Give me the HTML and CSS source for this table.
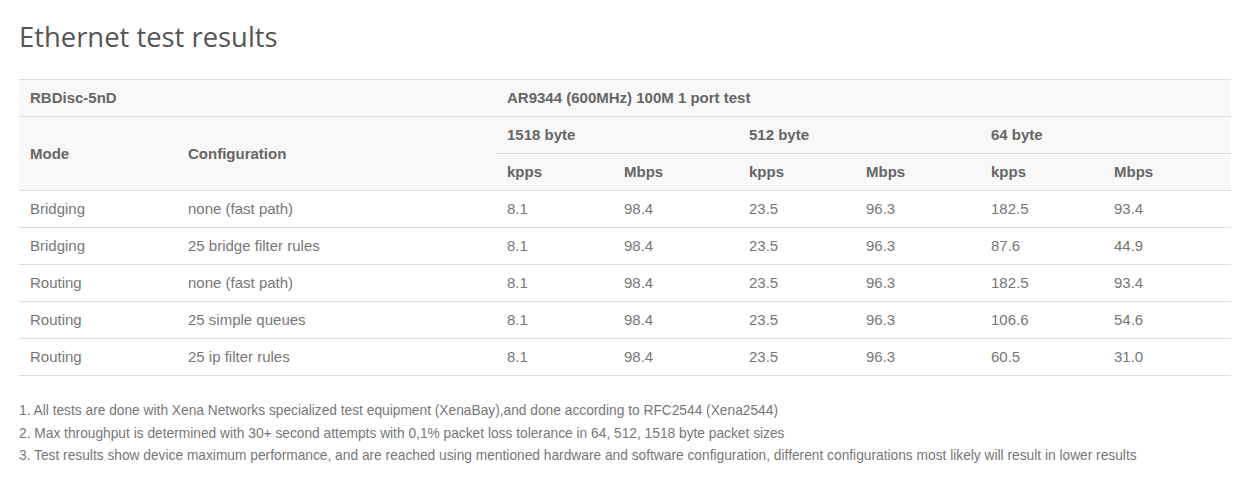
FILE: index.html
```html
<!DOCTYPE html>
<html lang="en">
<head>
<meta charset="utf-8">
<title>Ethernet test results</title>
<link rel="stylesheet" href="styles.css">
</head>
<body>
<main class="page">
  <h2 class="title">Ethernet test results</h2>
  <table class="results">
    <colgroup>
      <col class="c-mode"><col class="c-conf">
      <col class="c-k1"><col class="c-m1">
      <col class="c-k2"><col class="c-m2">
      <col class="c-k3"><col class="c-m3">
    </colgroup>
    <thead>
      <tr>
        <th colspan="2">RBDisc-5nD</th>
        <th colspan="6">AR9344 (600MHz) 100M 1 port test</th>
      </tr>
      <tr>
        <th rowspan="2">Mode</th>
        <th rowspan="2">Configuration</th>
        <th colspan="2">1518 byte</th>
        <th colspan="2">512 byte</th>
        <th colspan="2">64 byte</th>
      </tr>
      <tr>
        <th>kpps</th><th>Mbps</th>
        <th>kpps</th><th>Mbps</th>
        <th>kpps</th><th>Mbps</th>
      </tr>
    </thead>
    <tbody>
      <tr><td>Bridging</td><td>none (fast path)</td><td>8.1</td><td>98.4</td><td>23.5</td><td>96.3</td><td>182.5</td><td>93.4</td></tr>
      <tr><td>Bridging</td><td>25 bridge filter rules</td><td>8.1</td><td>98.4</td><td>23.5</td><td>96.3</td><td>87.6</td><td>44.9</td></tr>
      <tr><td>Routing</td><td>none (fast path)</td><td>8.1</td><td>98.4</td><td>23.5</td><td>96.3</td><td>182.5</td><td>93.4</td></tr>
      <tr><td>Routing</td><td>25 simple queues</td><td>8.1</td><td>98.4</td><td>23.5</td><td>96.3</td><td>106.6</td><td>54.6</td></tr>
      <tr><td>Routing</td><td>25 ip filter rules</td><td>8.1</td><td>98.4</td><td>23.5</td><td>96.3</td><td>60.5</td><td>31.0</td></tr>
    </tbody>
  </table>
  <div class="notes">
    <p>1. All tests are done with Xena Networks specialized test equipment (XenaBay),and done according to RFC2544 (Xena2544)</p>
    <p>2. Max throughput is determined with 30+ second attempts with 0,1% packet loss tolerance in 64, 512, 1518 byte packet sizes</p>
    <p>3. Test results show device maximum performance, and are reached using mentioned hardware and software configuration, different configurations most likely will result in lower results</p>
  </div>
</main>
</body>
</html>
```

FILE: styles.css
```css
html, body {
  margin: 0;
  padding: 0;
  background: #fff;
}

.page {
  padding: 0 19px;
  font-family: "Liberation Sans", Arial, sans-serif;
  color: #777;
}

.title {
  margin: 0;
  padding-top: 18px;
  height: 79px;
  box-sizing: border-box;
  font-family: "Open Sans", sans-serif;
  font-weight: 400;
  font-size: 27.4px;
  line-height: 38px;
  color: #555;
}

.results {
  width: 1212px;
  table-layout: fixed;
  border-collapse: collapse;
  font-size: 15px;
  line-height: 16px;
}

.c-mode { width: 158px; }
.c-conf { width: 319px; }
.c-k1 { width: 117px; }
.c-m1 { width: 125px; }
.c-k2 { width: 117px; }
.c-m2 { width: 125px; }
.c-k3 { width: 123px; }
.c-m3 { width: 128px; }

.results th,
.results td {
  padding: 10px 11px;
  text-align: left;
  vertical-align: middle;
  border-top: 1px solid #ddd;
}

.results thead th {
  background: #f8f8f8;
  font-weight: 700;
  color: #666;
}

.results tbody tr:last-child td {
  border-bottom: 1px solid #ddd;
}

.notes {
  margin-top: 24px;
  font-size: 13.75px;
  line-height: 22.5px;
  color: #777;
}

.notes p {
  margin: 0;
}
```
